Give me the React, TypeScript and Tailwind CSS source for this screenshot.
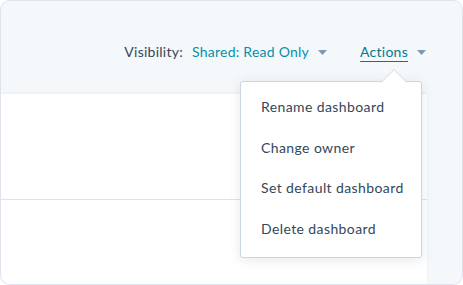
import { useState } from 'react'

const menuItems = [
  'Rename dashboard',
  'Change owner',
  'Set default dashboard',
  'Delete dashboard',
]

function Caret({ className = '' }: { className?: string }) {
  return (
    <svg width="9" height="5" viewBox="0 0 9 5" className={className}>
      <path d="M0 0 L9 0 L4.5 5 Z" fill="currentColor" />
    </svg>
  )
}

export default function App() {
  const [open] = useState(true)
  return (
    <div className="h-[285px] w-[463px] bg-white font-['Lato',sans-serif] text-[14px] text-[#33475b]">
      <div className="relative flex h-[285px] w-[463px] flex-col overflow-hidden rounded-[10px] border border-[#dfe3eb] bg-[#f5f8fa]">
        {/* 상단 헤더 */}
        <div className="flex h-[93px] shrink-0 items-start justify-end whitespace-nowrap pr-[36px] pt-[40px] leading-[22px] tracking-[0.25px]">
          <span>Visibility:</span>
          <button className="ml-[9px] flex items-center text-[#0091ae]">
            Shared: Read Only
            <Caret className="ml-[9px] text-[#7c98b6]" />
          </button>
          <button className="ml-[33px] flex items-center text-[#007a8c]">
            <span className="underline decoration-[1px] underline-offset-[4px]">Actions</span>
            <Caret className="ml-[9px] text-[#7c98b6]" />
          </button>
        </div>
        {/* 본문 */}
        <div className="flex flex-1">
          <div className="flex-1 bg-white shadow-[0_-1px_2px_rgba(45,62,80,0.05)]">
            <div className="h-[106px] border-b border-[#dfe3eb]" />
          </div>
          <div className="mb-[4px] w-[35px] shrink-0" />
        </div>
        {/* 액션 드롭다운 */}
        {open && (
          <div className="absolute left-[239px] top-[80px] w-[182px] rounded-[3px] border border-[#cbd6e2] bg-white pb-[8px] pt-[5px] shadow-[0_2px_12px_rgba(45,62,80,0.12)]">
            <svg
              width="26"
              height="14"
              viewBox="0 0 26 14"
              className="absolute right-[14px] top-[-13px]"
            >
              <path d="M0 13.5 L13 0.5 L26 13.5" fill="white" stroke="#cbd6e2" />
            </svg>
            {menuItems.map((item) => (
              <div
                key={item}
                className="flex h-[40.5px] items-center whitespace-nowrap px-[20px] leading-[22px] tracking-[0.4px]"
              >
                {item}
              </div>
            ))}
          </div>
        )}
      </div>
    </div>
  )
}
